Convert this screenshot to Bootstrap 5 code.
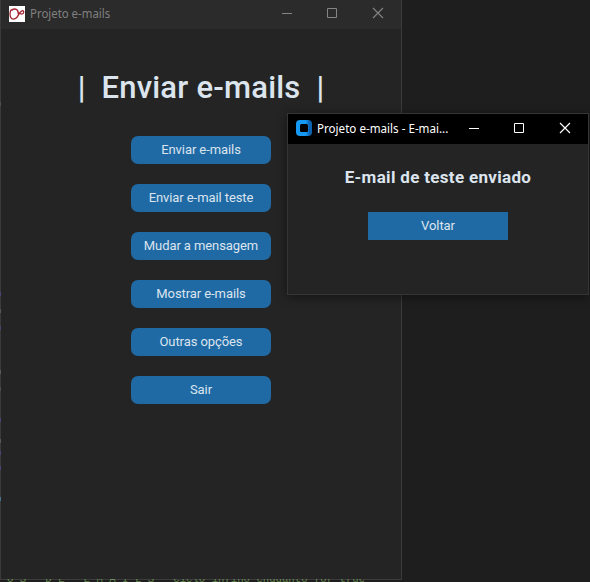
<!DOCTYPE html>
<html lang="pt-BR">
<head>
<meta charset="utf-8">
<meta name="viewport" content="width=device-width, initial-scale=1">
<title>Projeto e-mails</title>
<link href="https://cdn.jsdelivr.net/npm/bootstrap@5.3.0/dist/css/bootstrap.min.css" rel="stylesheet">
<style>
body{width:590px;height:582px;background:#1e1e1e;color:#dce4ee;font-family:Roboto,sans-serif}
.code-line{left:7px;top:572px;font:10.67px/14px "Liberation Mono",monospace;color:#5f8048;white-space:pre}
.code-edge i{position:absolute;left:0;width:1px;height:4px;opacity:.75}
.win{background:#242424;border:1px solid #3b3b3b}
.win-main{left:0;top:-1px;width:402px;height:581px;border-color:rgba(255,255,255,.13);background-clip:padding-box}
.win-dialog{left:287px;top:113px;width:302px;height:182px;border-color:#353535;box-shadow:0 2px 10px rgba(0,0,0,.45)}
.title-bar{font:12px/16px "Noto Sans","Open Sans",sans-serif;padding:0 0 2px 8px}
.win-main .title-bar{height:29px;background:#2b2b2b;color:#808080}
.win-dialog .title-bar{height:30px;background:#000;color:#fff}
.title-text{display:inline-block;margin-left:5px;transform:scaleX(.95);transform-origin:0 50%;white-space:nowrap}
.win-dialog .title-text{padding-top:2px;transform:scaleX(.968)}
.controls svg{display:block}
.heading{font-size:31px;line-height:38px;font-weight:500;letter-spacing:.22px;margin:40px 0 29px;white-space:pre}
.menu{gap:20px}
.action{width:140px;height:28px;padding:0;border:0;border-radius:7px;background:#1f6aa5;color:#dce4ee;font-size:13px;line-height:28px;letter-spacing:-.08px}
.action:hover{background:#144870;color:#dce4ee}
.message{font-size:17px;line-height:22px;font-weight:700;letter-spacing:.32px;margin:22px 0 24px}
</style>
<script src="https://cdn.jsdelivr.net/npm/bootstrap@5.3.0/dist/js/bootstrap.bundle.min.js"></script>
</head>
<body class="position-relative overflow-hidden m-0">
<div class="code-line position-absolute">O S   D E   E M A I L S   Ciclo infino enquanto for true</div>

<section class="win win-main position-absolute">
  <header class="title-bar d-flex align-items-center">
    <svg width="16" height="16" viewBox="0 0 16 16"><path fill="#fff" d="M0 0h16v16H0z"/><path d="M2.500 3.500C.8 5 .7 9 1.500 11c1 2.600 4 2.600 6 .8C9.500 10 10 6 13 4.800c1.800-.6 2.300 1.500 1 2.700-1.200 1-2.600.4-3.500-.6" fill="none" stroke="#a51f2c" stroke-width="1.300"/><path d="M2.500 4.500C4 2.500 7 2.300 8.300 4.200 9.200 5.500 9 7 9.700 8.300" fill="none" stroke="#a51f2c" stroke-width="1.500"/></svg>
    <span class="title-text">Projeto e-mails</span>
    <div class="controls d-flex ms-auto">
      <svg width="45" height="28" fill="none" stroke="#858585"><path d="M12 13.500h10"/></svg>
      <svg width="46" height="28" fill="none" stroke="#858585"><path d="M12.500 8.500h9v9h-9z"/></svg>
      <svg width="40" height="28" fill="none" stroke="#858585" stroke-width="1.100"><path d="M12 8l10 10M22 8L12 18"/></svg>
    </div>
  </header>
  <main class="d-flex flex-column align-items-center">
    <h1 class="heading">|  Enviar e-mails  |</h1>
    <div class="menu d-flex flex-column">
      <button class="btn action">Enviar e-mails</button>
      <button class="btn action">Enviar e-mail teste</button>
      <button class="btn action">Mudar a mensagem</button>
      <button class="btn action">Mostrar e-mails</button>
      <button class="btn action">Outras opções</button>
      <button class="btn action">Sair</button>
    </div>
  </main>
</section>

<div class="code-edge" aria-hidden="true">
  <i style="top:102px;background:#555"></i><i style="top:292px;background:#4c4b86"></i><i style="top:309px;background:#606468"></i><i style="top:326px;background:#4c4b86"></i><i style="top:370px;background:#666"></i><i style="top:387px;background:#555"></i><i style="top:418px;background:#4c4b86"></i><i style="top:439px;background:#666"></i><i style="top:451px;background:#4c4b86"></i><i style="top:466px;background:#4c4b86"></i><i style="top:497px;background:#4687a8"></i>
</div>

<section class="win win-dialog position-absolute">
  <header class="title-bar d-flex align-items-center">
    <svg width="16" height="16" viewBox="0 0 16 16"><defs><linearGradient id="tile"><stop offset=".6" stop-color="#1699f5"/><stop offset=".85" stop-color="#0c63b2"/></linearGradient></defs><rect width="16" height="16" rx="4" fill="url(#tile)"/><rect x="4" y="4" width="8" height="8" rx="1.500" fill="#000"/></svg>
    <span class="title-text">Projeto e-mails - E-mai...</span>
    <div class="controls d-flex ms-auto">
      <svg width="45" height="28" fill="none" stroke="#fff"><path d="M12 14.500h10"/></svg>
      <svg width="46" height="28" fill="none" stroke="#fff"><path d="M12.500 9.500h9v9h-9z"/></svg>
      <svg width="40" height="28" fill="none" stroke="#fff" stroke-width="1.200"><path d="M12 9l10 10M22 9L12 19"/></svg>
    </div>
  </header>
  <div class="d-flex flex-column align-items-center">
    <h2 class="message">E-mail de teste enviado</h2>
    <button class="btn action rounded-0">Voltar</button>
  </div>
</section>
</body>
</html>
